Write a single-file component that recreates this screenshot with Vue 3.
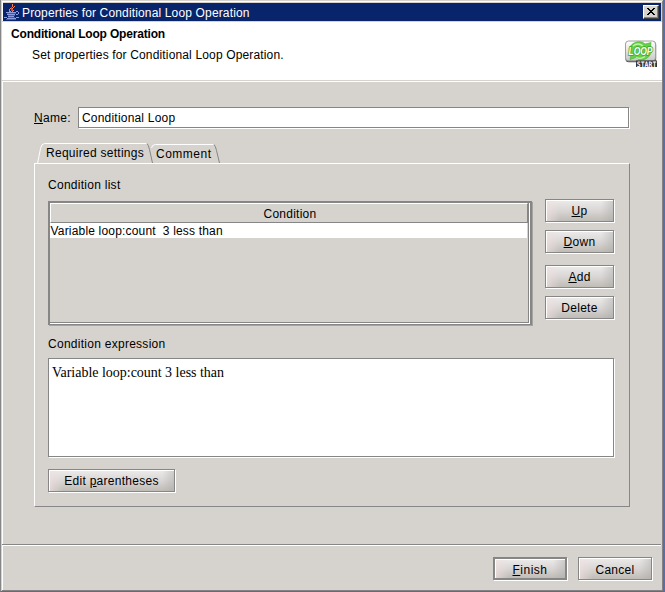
<script setup>
import { ref } from 'vue'

const name = ref('Conditional Loop')
const conditions = ref(['Variable loop:count\u00a0 3 less than'])
const actions = [
  { key: 'U', rest: 'p', cls: 'up' },
  { key: 'D', rest: 'own', cls: 'down' },
  { key: 'A', rest: 'dd', cls: 'add' },
  { key: '', rest: 'Delete', cls: 'delete' },
]
</script>

<template>
  <div class="window">
    <div class="titlebar">
      <svg class="java" width="16" height="18" viewBox="0 0 16 18" shape-rendering="crispEdges">
        <path d="M8 1h1v3h-1v1h-1v1h-1v2h1v1h-2v-3h1v-1h1v-1h1zM10 3h1v1h-1v1h-1v2h1v1h-1v1h-1v-1h-1v-2h1v-1h1v-1h1z" fill="#f08060" />
        <path d="M7 4h1v2h1v2h-2z" fill="#c84c38" />
        <path d="M2 9h10v1h-10zM3 11h8v1h-8zM4 13h6v1h-6zM12 8h2v1h-2zM14 9h1v2h-1zM12 11h2v1h-2zM0 14h3v1h-3zM3 15h9v1h-9zM12 14h3v1h-3z" fill="#8c9ce0" />
        <path d="M3 10h9v1h-9zM4 12h7v1h-7zM4 14h7v1h-7zM2 16h10v1h-10z" fill="#4858b0" />
      </svg>
      <span class="title-text">Properties for Conditional Loop Operation</span>
      <button class="close" aria-label="Close">
        <svg width="8" height="7" viewBox="0 0 8 7" shape-rendering="crispEdges">
          <path d="M0 0h2v1h1v1h2v-1h1v-1h2v1h-1v1h-1v1h-1v1h1v1h1v1h1v1h-2v-1h-1v-1h-2v1h-1v1h-2v-1h1v-1h1v-1h1v-1h-1v-1h-1v-1h-1z" fill="#000" />
        </svg>
      </button>
    </div>

    <header class="banner">
      <div>
        <h1>Conditional Loop Operation</h1>
        <p>Set properties for Conditional Loop Operation.</p>
      </div>
      <svg class="loop" width="34" height="29" viewBox="0 0 34 29">
        <defs>
          <linearGradient id="plate" x1="0" y1="0" x2="0" y2="1">
            <stop offset="0" stop-color="#fff" />
            <stop offset="1" stop-color="#c8c8c8" />
          </linearGradient>
        </defs>
        <rect x="1.400" y="1.600" width="30.800" height="20.600" rx="3.500" fill="#555" />
        <rect x="1.500" y="1" width="30" height="19.800" rx="3" fill="url(#plate)" stroke="#a0a0a0" />
        <path d="M5 9C7 4 11 1.500 16 1.800q3 0 5 2.200l6-1.500-.5 5 1.500 2.500q-2 8-8 9.500l-4 1-4-3-6 2 1-5z" fill="#66d048" stroke="#48b030" stroke-width=".6" />
        <path d="M9 6q5-4 10 0M12 17.500q5 2 9-1" fill="none" stroke="#c2f5a8" stroke-width="1.300" />
        <text class="loop-word" x="4.500" y="15" textLength="24" lengthAdjust="spacingAndGlyphs">LOOP</text>
        <rect x="12" y="20.500" width="21" height="6.500" fill="#333" />
        <text class="start-word" x="12.800" y="26.500" textLength="19.500" lengthAdjust="spacingAndGlyphs">START</text>
      </svg>
    </header>

    <main class="body">
      <div class="name-row">
        <label for="name"><u>N</u>ame:</label>
        <input id="name" v-model="name" type="text" />
      </div>

      <section class="tabs">
        <div class="tab-strip">
          <svg class="tab-shape" width="187" height="21" viewBox="0 0 187 21" fill="none">
            <path d="M1 20.500H3.500L6.500 5.500Q7.500 .5 10.500 .5H113" stroke="#fff" />
            <path d="M117.500 5Q118 1.500 121.500 1.500H180" stroke="#fff" />
            <path d="M113 .5Q114.500 2 115.500 6.500L118.500 20M180 1.500Q181.500 3 182.500 7.500L185.500 20" stroke="#868686" />
          </svg>
          <span class="tab active">Required settings</span>
          <span class="tab">Comment</span>
        </div>

        <div class="panel">
          <div class="caption">Condition list</div>
          <div class="list-row">
            <div class="table-frame">
              <div class="table">
                <div class="table-head">Condition</div>
                <div v-for="c in conditions" :key="c" class="table-row">{{ c }}</div>
              </div>
            </div>
            <div class="actions">
              <button v-for="a in actions" :key="a.rest" class="btn" :class="a.cls"><span><u>{{ a.key }}</u>{{ a.rest }}</span></button>
            </div>
          </div>
          <div class="caption expr-caption">Condition expression</div>
          <div class="expression">Variable loop:count 3 less than</div>
          <button class="btn edit"><span>Edit <u>p</u>arentheses</span></button>
        </div>
      </section>
    </main>

    <footer class="footer">
      <button class="btn primary"><span><u>F</u>inish</span></button>
      <button class="btn"><span>Cancel</span></button>
    </footer>
  </div>
</template>

<style>
body {
  margin: 0;
  overflow: hidden;
}
</style>

<style scoped>
.window {
  box-sizing: border-box;
  width: 665px;
  height: 592px;
  display: flex;
  flex-direction: column;
  padding: 3px 1px 0 2px;
  background: #d6d3ce;
  border-left: 1px solid #868686;
  border-right: 2px solid #586fa6;
  border-bottom: 1px solid #5c6a8c;
  box-shadow: inset 1px 1px #d6d3ce, inset -1px -1px #848284, inset 2px 2px #fff;
  font: 12px/14px "Liberation Sans", Arial, sans-serif;
  letter-spacing: 0.15px;
  color: #000;
}
.titlebar {
  display: flex;
  align-items: center;
  flex: 0 0 18px;
  margin-right: 1px;
  background: #08246b;
  color: #fff;
}
.java {
  flex: none;
  margin-left: 1px;
}
.title-text {
  flex: 1;
  margin-left: 2px;
  padding-top: 1px;
}
.close {
  box-sizing: border-box;
  display: flex;
  align-items: center;
  justify-content: center;
  width: 16px;
  height: 14px;
  margin-right: 2px;
  padding: 0 1px 1px 0;
  border: 1px solid;
  border-color: #fff #404040 #404040 #fff;
  background: #d6d3ce;
  box-shadow: inset -1px -1px #848284;
}
.banner {
  box-sizing: border-box;
  display: flex;
  justify-content: space-between;
  flex: 0 0 59px;
  margin: 0 0 0 -1px;
  padding: 5px 4px 0 9px;
  background: #fff;
  border-top: 1px solid #d6d3ce;
}
.banner h1 {
  margin: 0;
  font-size: 12px;
  line-height: 14px;
  letter-spacing: -0.18px;
}
.banner p {
  margin: 7px 0 0 21px;
}
.loop {
  margin-top: 13px;
}
.loop-word {
  font: italic bold 10px "Liberation Sans", sans-serif;
  letter-spacing: 0;
  fill: #fff;
  stroke: #35a822;
  stroke-width: 1.6px;
  paint-order: stroke;
}
.start-word {
  font: bold 7.5px "DejaVu Sans Mono", monospace;
  letter-spacing: 0;
  fill: #fff;
}
.body {
  box-sizing: border-box;
  flex: 0 0 464px;
  margin: 0 0 0 -1px;
  padding: 26px 32px 0;
  border-top: 1px solid #d6d3ce;
  box-shadow: inset 0 1px #fff;
}
.name-row {
  display: flex;
  align-items: center;
  height: 21px;
}
.name-row label {
  width: 44px;
  padding-top: 1px;
  letter-spacing: 0.3px;
}
.name-row input {
  box-sizing: border-box;
  width: 551px;
  height: 21px;
  padding: 1px 3px 0;
  border: 1px solid #868686;
  border-radius: 0;
  outline: none;
  background: #fff;
  box-shadow: 1px 1px #fff;
  color: #000;
  font: inherit;
  letter-spacing: 0.2px;
}
.tabs {
  margin-top: 15px;
  width: 596px;
}
.tab-strip {
  display: grid;
  grid-template-columns: 110px auto;
  height: 20px;
}
.tab-strip > * {
  grid-row: 1;
}
.tab-shape {
  grid-column: 1 / 3;
  z-index: 1;
}
.tab {
  grid-column: 2;
  z-index: 2;
  padding: 4px 0 0 12px;
  letter-spacing: 0.5px;
}
.tab.active {
  grid-column: 1;
  padding-top: 3px;
  white-space: nowrap;
  letter-spacing: 0.27px;
}
.panel {
  box-sizing: border-box;
  height: 344px;
  padding: 14px 15px 0 13px;
  border: 1px solid;
  border-color: #fff #868686 #868686 #fff;
}
.caption {
  height: 14px;
  letter-spacing: 0.27px;
}
.list-row {
  display: flex;
  gap: 13px;
  margin-top: 7px;
}
.table-frame {
  box-sizing: border-box;
  width: 484px;
  height: 124px;
  margin-top: 2px;
  border: 2px solid #868686;
  border-bottom-width: 1px;
  background: #fff;
  padding: 0 1px 1px 0;
  box-shadow: 1px 1px #a6a4a1;
}
.table {
  box-sizing: border-box;
  height: 100%;
  background: #d6d3ce;
  border-right: 1px solid #868686;
  border-bottom: 1px solid #868686;
}
.table-head {
  box-sizing: border-box;
  height: 20px;
  padding: 3px 0 0 2px;
  border: 1px solid;
  border-color: #fff #868686 #868686 #fff;
  text-align: center;
  letter-spacing: 0.25px;
}
.table-row {
  height: 15px;
  padding-top: 1px;
  box-sizing: border-box;
  background: #fff;
  margin-right: 1px;
  padding-left: 0.5px;
  letter-spacing: 0.18px;
  white-space: pre;
}
.actions {
  display: flex;
  flex-direction: column;
}
.btn {
  box-sizing: border-box;
  display: flex;
  align-items: center;
  justify-content: center;
  width: 69px;
  height: 23px;
  padding: 1px 0 0;
  border: 1px solid #868686;
  background:
    linear-gradient(90deg, rgba(240, 224, 224, 0.7), rgba(225, 215, 215, 0) 14px, rgba(190, 188, 186, 0) calc(100% - 12px), rgba(170, 168, 166, 0.45)),
    linear-gradient(#edebeb, #d9d6d5 50%, #bfbcb6);
  box-shadow: 1px 1px #fff, inset 1px 1px #fff;
  color: #000;
  font: inherit;
  letter-spacing: 0.28px;
}
.down {
  margin-top: 8px;
}
.add {
  margin-top: 12px;
}
.delete {
  margin-top: 8px;
}
.expr-caption {
  margin-top: 12px;
}
.expression {
  box-sizing: border-box;
  width: 566px;
  height: 99px;
  margin-top: 7px;
  padding: 6px 3px;
  border: 1px solid #868686;
  background: #fff;
  box-shadow: 1px 1px #fff;
  font: 14px/16px "Liberation Serif", "Times New Roman", serif;
  letter-spacing: -0.02px;
}
.edit {
  width: 127px;
  margin-top: 12px;
}
.footer {
  box-sizing: border-box;
  display: flex;
  justify-content: flex-end;
  gap: 11px;
  flex: 1;
  margin: 0 1px 0 -1px;
  padding: 12px 9px 0;
  border-top: 1px solid #868686;
  box-shadow: inset 0 1px #fff;
}
.footer .btn {
  width: 74px;
  padding-top: 2px;
}
.footer .primary {
  border-width: 2px;
  letter-spacing: 0.5px;
}
</style>
